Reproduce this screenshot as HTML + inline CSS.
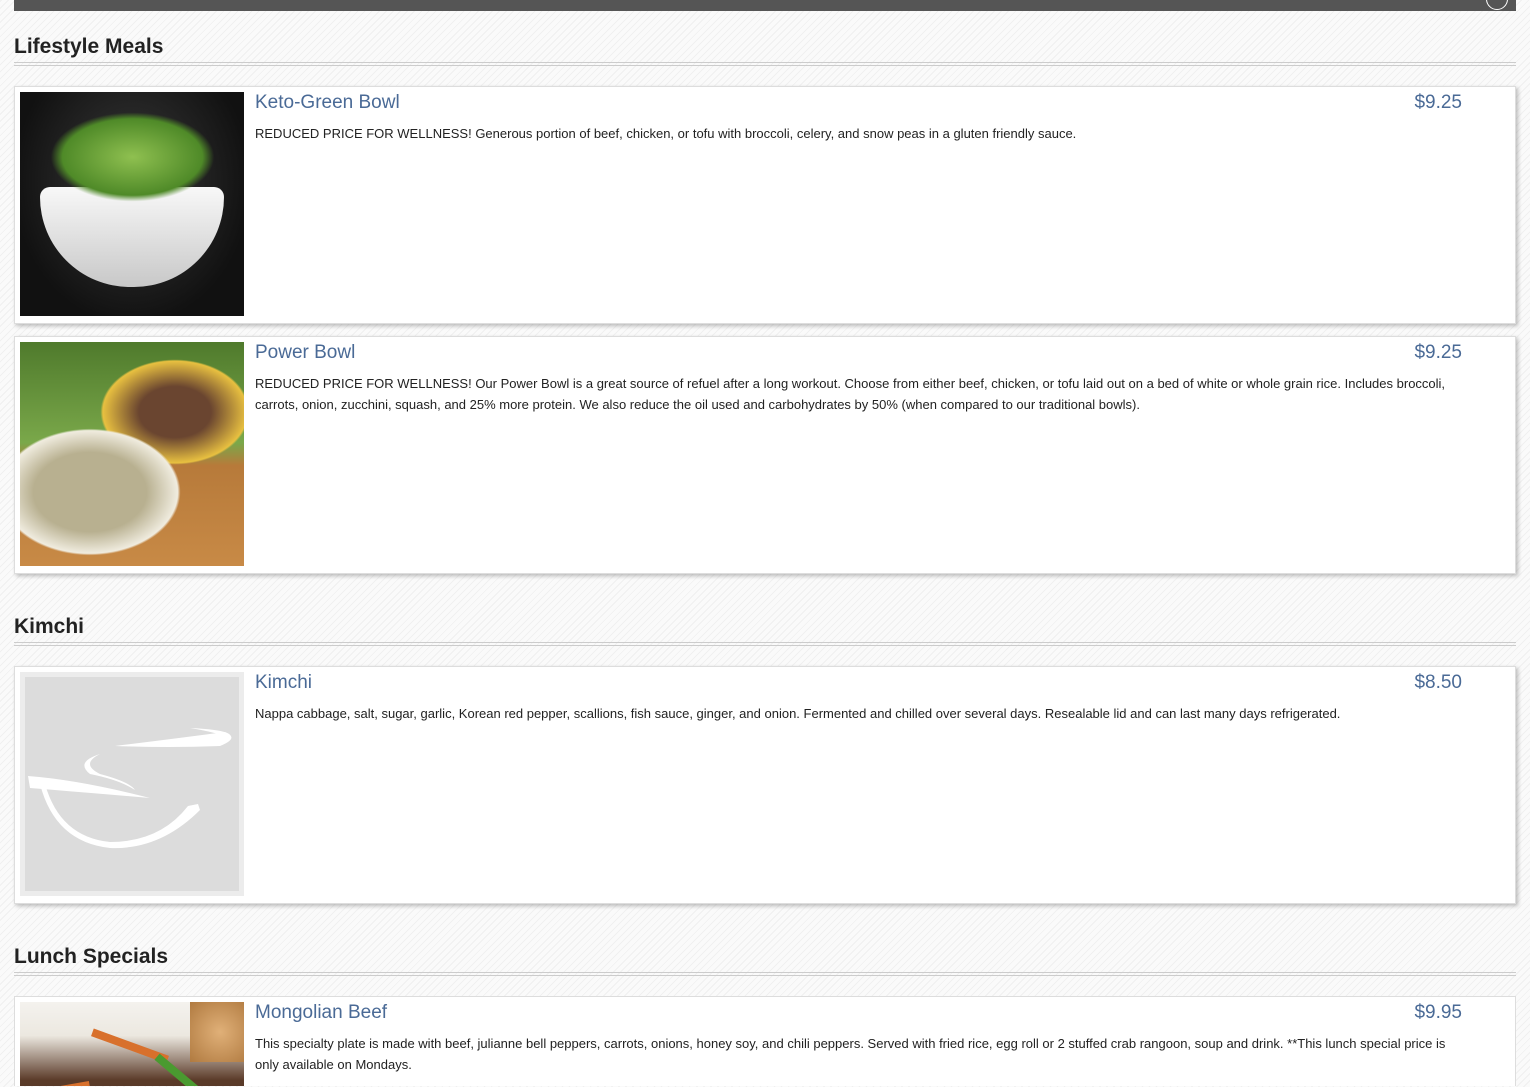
<!DOCTYPE html>
<html style="width:1530px;height:1087px;overflow:hidden"><head><meta charset="utf-8"><style>
html,body{margin:0;padding:0}
body{width:1530px;height:1087px;overflow:hidden;position:relative;font-family:"Liberation Sans",Arial,sans-serif;
background:#fafafa repeating-linear-gradient(-45deg,#fafafa 0 4px,#f0f0f0 4px 5px);}
.bar{position:absolute;left:14px;top:0;width:1502px;height:11px;background:#555;overflow:hidden}
.circ{position:absolute;left:1472px;top:-12px;width:22px;height:22px;border:1.5px solid #fff;border-radius:50%;box-sizing:border-box}
h2{position:absolute;left:14px;margin:0;font-size:21px;font-weight:bold;color:#222}
.rule{position:absolute;left:14px;width:1502px;height:2px;border-top:1px solid #ccc;border-bottom:1px solid #ccc}
.card{position:absolute;left:14px;width:1500px;height:236px;background:#fff;border:1px solid #ddd;box-shadow:2px 2px 4px rgba(0,0,0,.25);overflow:hidden}
.img{position:absolute;left:5px;top:5px;width:224px;height:224px;overflow:hidden}
.t{position:absolute;left:240px;top:5px;font-size:19px;color:#4a6a96}
.p{position:absolute;right:53px;top:5px;font-size:19px;color:#4a6a96}
.d{position:absolute;left:240px;top:36px;width:1210px;font-size:13px;line-height:21px;color:#222}
</style></head><body>
<div class="bar"><div class="circ"></div></div>

<h2 style="top:35px">Lifestyle Meals</h2>
<div class="rule" style="top:62px"></div>

<div class="card" style="top:86px">
 <div class="img" style="background:radial-gradient(ellipse at 50% 40%,#3a3a3a,#111 75%)">
  <div style="position:absolute;left:20px;top:95px;width:184px;height:100px;background:linear-gradient(#f8f8f8,#c8c8c8);border-radius:10px 10px 90px 90px"></div>
  <div style="position:absolute;left:30px;top:20px;width:165px;height:90px;background:radial-gradient(ellipse,#8fc050,#4f8a28 60%,transparent 70%)"></div>
 </div>
 <div class="t">Keto-Green Bowl</div><div class="p">$9.25</div>
 <div class="d">REDUCED PRICE FOR WELLNESS! Generous portion of beef, chicken, or tofu with broccoli, celery, and snow peas in a gluten friendly sauce.</div>
</div>

<div class="card" style="top:336px">
 <div class="img" style="background:linear-gradient(#4f7a2c 0,#7aa84a 45%,#b77a3a 55%,#c88a46 100%)">
  <div style="position:absolute;left:70px;top:10px;width:170px;height:120px;background:radial-gradient(ellipse,#6a4530 30%,#e8c040 60%,transparent 62%)"></div>
  <div style="position:absolute;left:-30px;top:80px;width:200px;height:140px;background:radial-gradient(ellipse,#b8b090 40%,#f0ecdf 62%,transparent 64%)"></div>
 </div>
 <div class="t">Power Bowl</div><div class="p">$9.25</div>
 <div class="d">REDUCED PRICE FOR WELLNESS! Our Power Bowl is a great source of refuel after a long workout. Choose from either beef, chicken, or tofu laid out on a bed of white or whole grain rice. Includes broccoli, carrots, onion, zucchini, squash, and 25% more protein. We also reduce the oil used and carbohydrates by 50% (when compared to our traditional bowls).</div>
</div>

<h2 style="top:615px">Kimchi</h2>
<div class="rule" style="top:642px"></div>

<div class="card" style="top:666px">
 <div class="img" style="background:#ececec">
  <div style="position:absolute;left:5px;top:5px;width:214px;height:214px;background:#dcdcdc"></div>
  <svg style="position:absolute;left:0;top:0" width="224" height="224" viewBox="0 0 224 224">
   <path d="M8 104 Q60 108 130 126 Q60 120 10 116 Z" fill="#fff"/>
   <path d="M25 112 Q40 165 90 170 Q140 170 168 134 L178 132 L180 138 Q140 178 90 176 Q35 170 20 112 Z" fill="#fff"/>
   <path d="M95 74 Q160 66 205 60 Q220 66 200 74 Q150 76 95 74 Z" fill="#fff"/>
   <path d="M170 56 Q215 58 210 66 Q195 60 170 56 Z" fill="#fff"/>
   <path d="M80 82 Q60 92 80 102 Q110 110 115 118 Q100 108 70 102 Q55 90 80 82 Z" fill="#fff"/>
  </svg>
 </div>
 <div class="t">Kimchi</div><div class="p">$8.50</div>
 <div class="d">Nappa cabbage, salt, sugar, garlic, Korean red pepper, scallions, fish sauce, ginger, and onion. Fermented and chilled over several days. Resealable lid and can last many days refrigerated.</div>
</div>

<h2 style="top:945px">Lunch Specials</h2>
<div class="rule" style="top:972px"></div>

<div class="card" style="top:996px;height:89px;box-shadow:none;border-bottom:none">
 <div class="img" style="background:linear-gradient(#f4f2ee 0,#ece8e0 15%,#5a3a28 35%,#3a2418 100%)">
  <div style="position:absolute;left:170px;top:0;width:60px;height:60px;background:radial-gradient(#e0b078,#b07a40)"></div>
  <div style="position:absolute;left:70px;top:40px;width:80px;height:8px;background:#d8702c;transform:rotate(20deg)"></div>
  <div style="position:absolute;left:130px;top:70px;width:60px;height:8px;background:#4a9a30;transform:rotate(40deg)"></div>
  <div style="position:absolute;left:0;top:85px;width:70px;height:7px;background:#d8702c;transform:rotate(-10deg)"></div>
 </div>
 <div class="t">Mongolian Beef</div><div class="p">$9.95</div>
 <div class="d">This specialty plate is made with beef, julianne bell peppers, carrots, onions, honey soy, and chili peppers. Served with fried rice, egg roll or 2 stuffed crab rangoon, soup and drink. **This lunch special price is only available on Mondays.</div>
</div>
</body></html>
